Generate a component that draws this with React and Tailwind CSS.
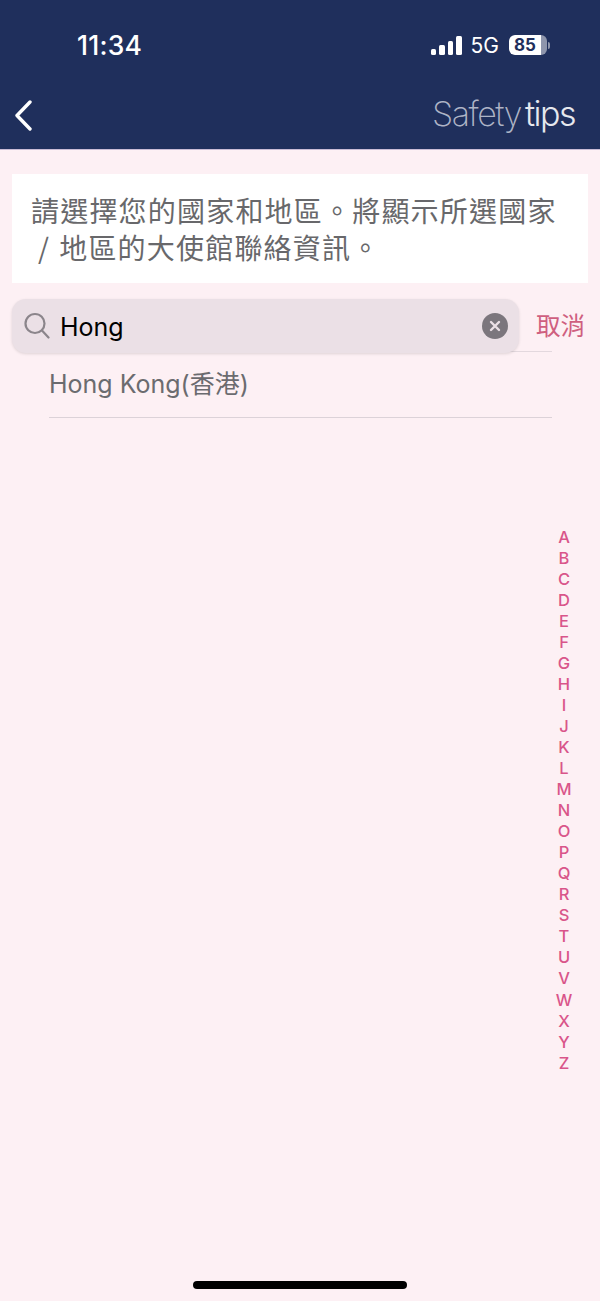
const letters = "ABCDEFGHIJKLMNOPQRSTUVWXYZ".split("");

function StatusBar() {
  return (
    <div className="flex h-[90px] items-center justify-between pl-[77px] pr-[50px] text-white">
      <span className="text-[26.5px] font-medium leading-none font-['Inter',sans-serif] tracking-[0.2px]">11:34</span>
      <div className="flex items-center">
        <div className="flex items-end gap-[3px]">
          <div className="h-[6px] w-[5.5px] rounded-[1.5px] bg-white" />
          <div className="h-[10px] w-[5.5px] rounded-[1.5px] bg-white" />
          <div className="h-[14px] w-[5.5px] rounded-[1.5px] bg-white" />
          <div className="h-[19px] w-[5.5px] rounded-[1.5px] bg-white" />
        </div>
        <span className="ml-[9px] text-[21px] leading-none font-['Inter',sans-serif]">5G</span>
        <div className="ml-[10px] flex h-[20px] w-[38px] items-center overflow-hidden rounded-[6px] bg-[#8e95ac]">
          <div className="flex h-full w-[32px] items-center justify-center rounded-l-[6px] bg-white text-[17px] font-bold leading-none text-[#1f2f5c] font-['Inter',sans-serif]">
            85
          </div>
        </div>
        <div className="ml-[1px] h-[7px] w-[2px] rounded-r-full bg-[#8e95ac]" />
      </div>
    </div>
  );
}

function NavBar() {
  return (
    <div className="flex h-[59px] items-start justify-between pl-[14px] pr-[25px] pt-[9px]">
      <svg width="20" height="32" viewBox="0 0 20 32" fill="none" stroke="white" strokeWidth="3.4" strokeLinecap="round" strokeLinejoin="round">
        <path d="M16 3 L3 16.5 L16 30" />
      </svg>
      <div className="text-[34px] leading-[30px] tracking-[-1.5px] font-['Inter',sans-serif]">
        <span className="font-[200] text-[#aeb4c6]">Safety</span>
        <span className="ml-[4px] font-[300] text-[#e6e8ee]">tips</span>
      </div>
    </div>
  );
}

function SearchRow() {
  return (
    <div className="relative z-10 mt-[16px] flex items-center pl-[12px] pr-[15px]">
      <div className="flex h-[54px] w-[507px] items-center rounded-[14px] bg-[#ebe0e6] pl-[12px] pr-[11px] shadow-[0_1px_3px_rgba(0,0,0,0.12)]">
        <svg width="26" height="28" viewBox="0 0 26 28" fill="none" stroke="#8b858b" strokeWidth="2.2" strokeLinecap="round">
          <circle cx="11" cy="11.5" r="9.5" />
          <path d="M18 18.5 L24.5 25.5" />
        </svg>
        <span className="ml-[10px] flex-1 pt-[2px] text-[25px] leading-none text-black font-['Inter',sans-serif]">Hong</span>
        <div className="flex h-[26px] w-[26px] items-center justify-center rounded-full bg-[#7b767d]">
          <svg width="12" height="12" viewBox="0 0 12 12" fill="none" stroke="#ebe0e6" strokeWidth="2.4" strokeLinecap="round">
            <path d="M2 2 L10 10 M10 2 L2 10" />
          </svg>
        </div>
      </div>
      <span className="ml-auto -mt-[2px] text-[24.5px] leading-none text-[#cf5f7f] font-['Noto_Sans_CJK_TC',sans-serif]">取消</span>
    </div>
  );
}

export default function App() {
  return (
    <div className="relative h-[1301px] w-[600px] overflow-hidden bg-[#fdf0f4]">
      <header className="h-[150px] border-b border-[#c9bcd6] bg-[#1f2f5c]">
        <StatusBar />
        <NavBar />
      </header>

      <div className="mx-[12px] mt-[24px] h-[109px] bg-white pl-[19px] pt-[18px] text-[28px] font-normal leading-[37px] tracking-[1.2px] text-[#68686b] font-['Noto_Sans_CJK_TC',sans-serif]">
        <p>請選擇您的國家和地區。將顯示所選國家</p>
        <p className="flex">
          <span className="ml-[7px] mr-[9px]">/</span>
          地區的大使館聯絡資訊。
        </p>
      </div>

      <SearchRow />

      <div className="ml-[49px] mr-[48px] -mt-[2px] border-t border-[#e3d8de]">
        <div className="flex h-[66px] items-center border-b border-[#dcd2d8] text-[25px] leading-none text-[#6b6b6f] font-['Inter','Noto_Sans_CJK_TC',sans-serif]">
          Hong Kong(香港)
        </div>
      </div>

      {/* section index */}
      <div className="absolute right-[26px] top-[526.5px] flex w-[20px] flex-col items-center text-[16.5px] font-medium leading-[21.04px] text-[#d9558a] font-['Inter',sans-serif]">
        {letters.map((l) => (
          <span key={l}>{l}</span>
        ))}
      </div>

      <div className="absolute bottom-[12px] left-[193px] h-[8px] w-[214px] rounded-full bg-black" />
    </div>
  );
}
